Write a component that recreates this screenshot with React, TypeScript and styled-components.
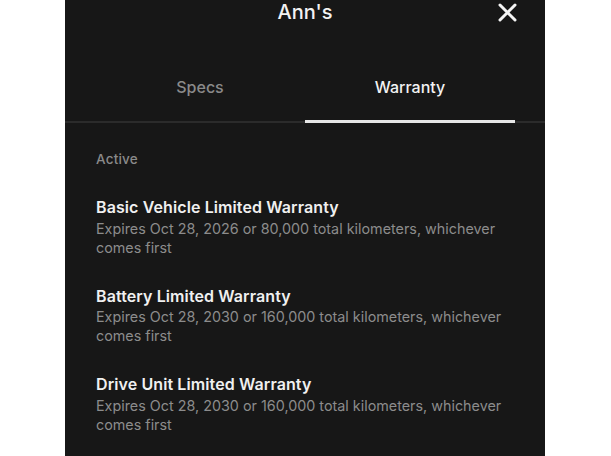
import React from "react";
import styled, { createGlobalStyle } from "styled-components";

const Global = createGlobalStyle`
  html, body { margin: 0; padding: 0; background: #ffffff; }
  body { font-family: Inter, "Noto Sans", Roboto, sans-serif; -webkit-font-smoothing: antialiased; }
`;

const Page = styled.div`
  width: 611px;
  height: 456px;
  display: flex;
  justify-content: flex-start;
  padding-left: 65px;
  box-sizing: border-box;
  overflow: hidden;
`;

const Panel = styled.div`
  width: 480px;
  height: 456px;
  background: #171717;
  display: flex;
  flex-direction: column;
`;

const Header = styled.div`
  display: grid;
  grid-template-columns: 1fr auto 1fr;
  align-items: center;
  height: 24px;
  padding: 0 28px;
`;

const Title = styled.div`
  grid-column: 2;
  color: #f2f2f2;
  font-size: 20px;
  font-weight: 500;
  line-height: 24px;
`;

const Close = styled.button`
  grid-column: 3;
  justify-self: end;
  background: none;
  border: none;
  padding: 0;
  width: 19px;
  height: 19px;
  display: flex;
  cursor: pointer;
`;

const TabBar = styled.div`
  margin-top: 53px;
  display: flex;
  padding: 0 30px;
  border-bottom: 2px solid #2b2b2b;
`;

const Tab = styled.div<{ $active?: boolean }>`
  flex: 1;
  text-align: center;
  font-size: 16px;
  line-height: 20px;
  font-weight: 500;
  color: ${(p) => (p.$active ? "#f2f2f2" : "#8a8a8a")};
  padding: 0 0 23px;
  margin-bottom: -2px;
  border-bottom: 3px solid ${(p) => (p.$active ? "#e6e6e6" : "transparent")};
`;

const Content = styled.div`
  padding: 28px 30px 0 31px;
  display: flex;
  flex-direction: column;
`;

const SectionLabel = styled.div`
  font-size: 13.5px;
  line-height: 16px;
  font-weight: 500;
  letter-spacing: 0.2px;
  color: #8a8a8a;
  margin-bottom: 29px;
`;

const List = styled.div`
  display: flex;
  flex-direction: column;
  gap: 28.1px;
`;

const Item = styled.div`
  display: flex;
  flex-direction: column;
`;

const ItemTitle = styled.div`
  font-size: 16px;
  line-height: 22.5px;
  font-weight: 600;
  letter-spacing: 0.1px;
  color: #f0f0f0;
`;

const ItemSub = styled.div`
  font-size: 14.35px;
  line-height: 19px;
  font-weight: 400;
  color: #8c8c8c;
  max-width: 420px;
`;

const items = [
  { title: "Basic Vehicle Limited Warranty", sub: "Expires Oct 28, 2026 or 80,000 total kilometers, whichever comes first" },
  { title: "Battery Limited Warranty", sub: "Expires Oct 28, 2030 or 160,000 total kilometers, whichever comes first" },
  { title: "Drive Unit Limited Warranty", sub: "Expires Oct 28, 2030 or 160,000 total kilometers, whichever comes first" },
];

export default function App() {
  return (
    <>
      <Global />
      <Page>
        <Panel>
          <Header>
            <Title>Ann's</Title>
            <Close aria-label="Close">
              <svg width="19" height="19" viewBox="0 0 19 19">
                <path d="M2 2 L17 17 M17 2 L2 17" stroke="#f5f5f5" strokeWidth="3" strokeLinecap="round" />
              </svg>
            </Close>
          </Header>
          <TabBar>
            <Tab>Specs</Tab>
            <Tab $active>Warranty</Tab>
          </TabBar>
          <Content>
            <SectionLabel>Active</SectionLabel>
            <List>
              {items.map((it) => (
                <Item key={it.title}>
                  <ItemTitle>{it.title}</ItemTitle>
                  <ItemSub>{it.sub}</ItemSub>
                </Item>
              ))}
            </List>
          </Content>
        </Panel>
      </Page>
    </>
  );
}
